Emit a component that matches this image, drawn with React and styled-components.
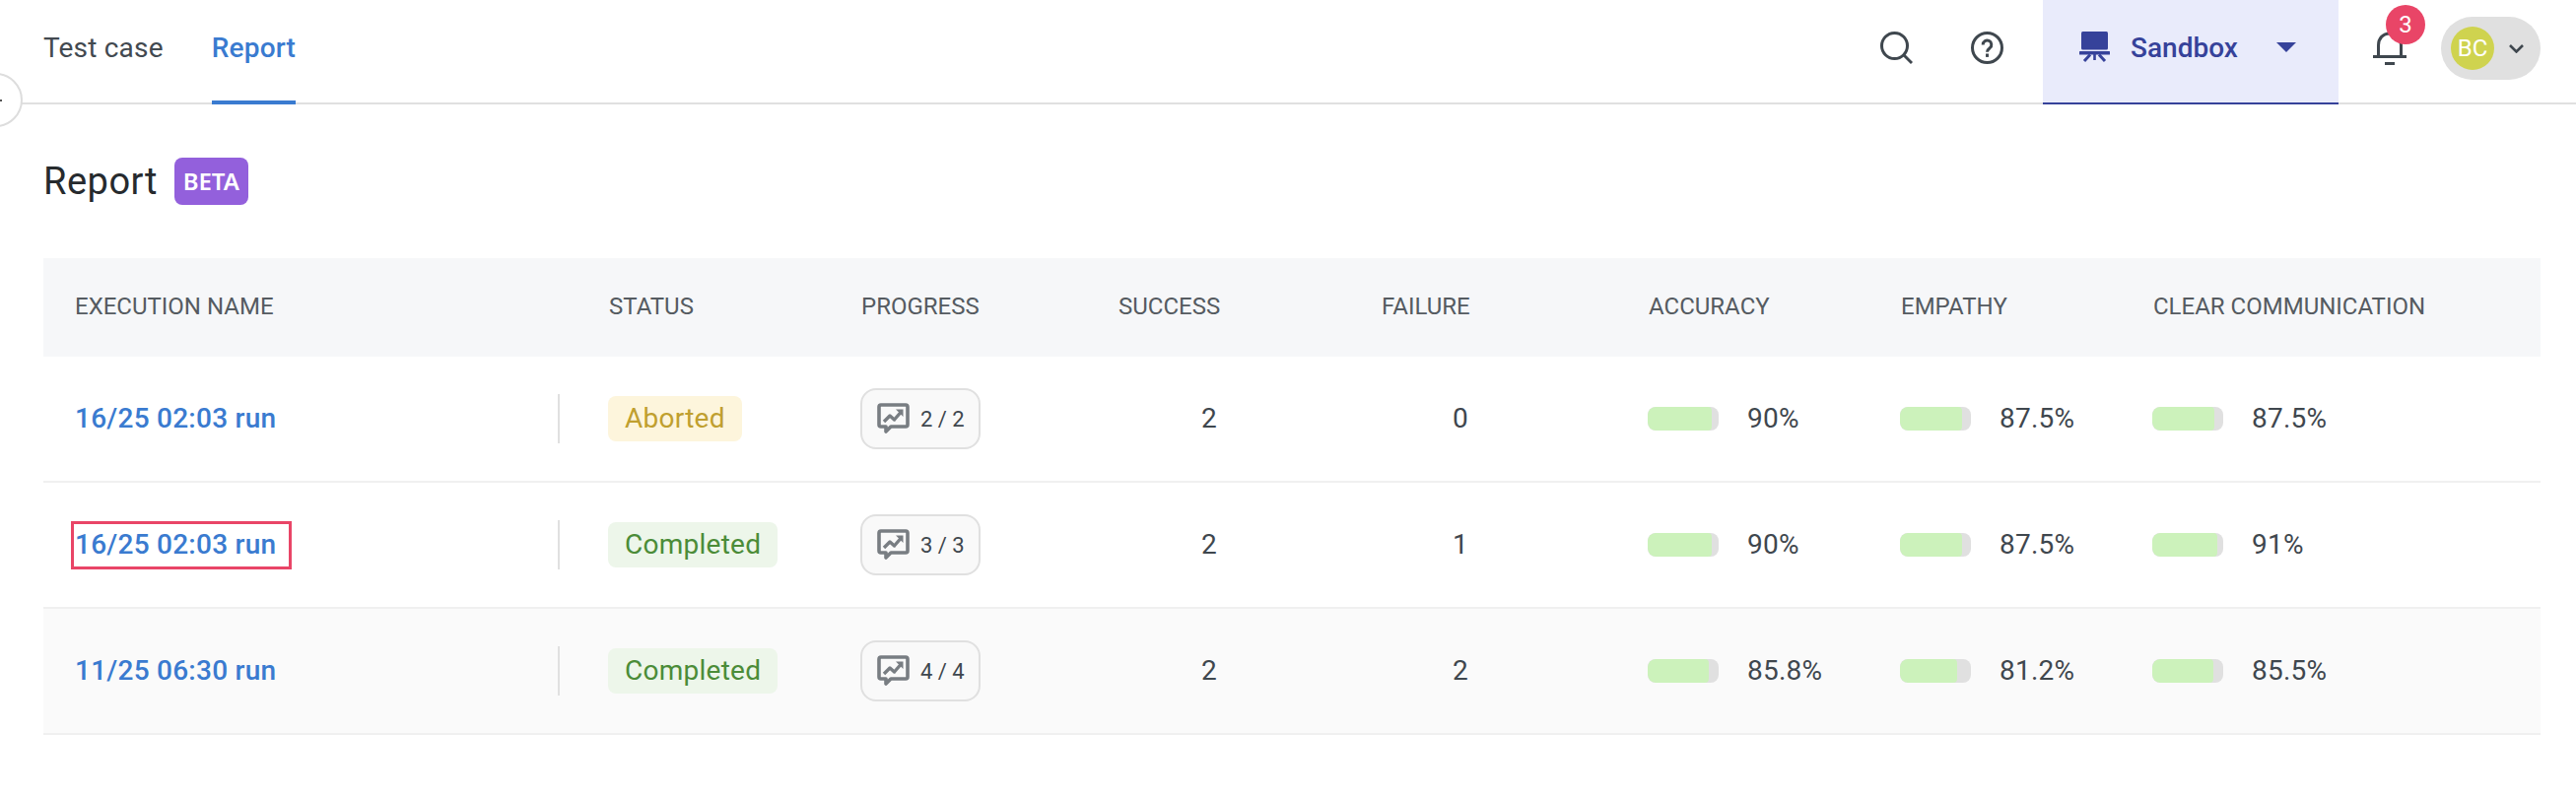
import { createGlobalStyle, styled } from "styled-components";

const GlobalStyle = createGlobalStyle`
    html, body {
        margin: 0;
        padding: 0;
        background: #fff;
        font-family: Roboto, "Noto Sans", sans-serif;
        overflow: hidden;
    }
`

const Page = styled.div`
    position: relative;
    width: 2614px;
    height: 810px;
    background: #fff;
`

const NavBar = styled.nav`
    height: 104px;
    display: flex;
    align-items: flex-start;
    justify-content: space-between;
    padding-left: 44px;
    border-bottom: 2px solid #e0e0e0;
`

const Tabs = styled.div`
    display: flex;
    gap: 49px;
`

const Tab = styled.div`
    height: 106px;
    box-sizing: border-box;
    line-height: 98px;
    font-size: 28px;
    letter-spacing: 0.2px;
    color: ${props => props.active ? "#3a7bd0" : "#424950"};
    font-weight: ${props => props.active ? 500 : 400};
    border-bottom: 4px solid ${props => props.active ? "#3a7bd0" : "transparent"};
`

const NavRight = styled.div`
    display: flex;
    align-items: flex-start;
    padding-right: 36px;
`

const IconButton = styled.div`
    width: 33px;
    height: 34px;
    margin: 32px ${props => props.right || "0"} 0 0;
    color: #3f474e;
`

const Workspace = styled.div`
    width: 300px;
    height: 106px;
    box-sizing: border-box;
    margin-right: 35px;
    padding: 0 43px 8px 37px;
    display: flex;
    align-items: center;
    background: #e9ebfb;
    border-bottom: 2px solid #36429a;
    color: #36429a;
    font-size: 28px;
    font-weight: 500;
`

const WorkspaceName = styled.span`
    margin: 0 auto 0 21px;
`

const Caret = styled.span`
    width: 0;
    height: 0;
    border-left: 10px solid transparent;
    border-right: 10px solid transparent;
    border-top: 10px solid #36429a;
`

const BellWrap = styled.div`
    position: relative;
    width: 34px;
    height: 34px;
    margin: 32px 35px 0 0;
    color: #3f474e;
`

const Badge = styled.span`
    position: absolute;
    left: 13px;
    top: -27px;
    width: 40px;
    height: 40px;
    border-radius: 50%;
    background: #e94567;
    color: #fff;
    font-size: 24px;
    line-height: 40px;
    text-align: center;
`

const UserPill = styled.div`
    width: 101px;
    height: 64px;
    margin-top: 17px;
    box-sizing: border-box;
    padding: 0 17px 0 10px;
    display: flex;
    align-items: center;
    justify-content: space-between;
    border-radius: 32px;
    background: #e0e0e0;
    color: #3f474e;
`

const Avatar = styled.div`
    width: 44px;
    height: 44px;
    border-radius: 50%;
    background: #cfd34f;
    color: #fff;
    font-size: 24px;
    line-height: 44px;
    text-align: center;
`

const CollapseButton = styled.div`
    position: absolute;
    left: -32px;
    top: 74px;
    width: 55px;
    height: 55px;
    box-sizing: border-box;
    border: 2px solid #ddd;
    border-radius: 50%;
    background: #fff;
    &::after {
        content: "";
        position: absolute;
        left: 30px;
        top: 25px;
        width: 2px;
        height: 2px;
        background: #555;
    }
`

const Content = styled.main`
    padding: 54px 36px 0 44px;
`

const TitleRow = styled.div`
    display: flex;
    align-items: center;
    gap: 17px;
    height: 48px;
`

const Title = styled.h1`
    margin: 0;
    font-size: 38px;
    font-weight: 400;
    color: #262a2e;
    letter-spacing: 0.5px;
`

const Beta = styled.span`
    width: 75px;
    height: 48px;
    border-radius: 8px;
    background: #9360dc;
    color: #fff;
    font-family: "Noto Sans", sans-serif;
    font-size: 24px;
    font-weight: 600;
    line-height: 48px;
    text-align: center;
`

const Table = styled.div`
    margin-top: 54px;
`

const Row = styled.div`
    display: grid;
    grid-template-columns: 542px 256px 261px 267px 271px 256px 256px 1fr;
    align-items: center;
    height: ${props => props.head ? "100px" : "128px"};
    box-sizing: border-box;
    background: ${props => props.head ? "#f6f7f9" : props.shaded ? "#fafafa" : "#fff"};
    border-bottom: ${props => props.head ? "none" : "2px solid #f0f0f0"};
`

const HeadCell = styled.div`
    padding: 0 0 2px 32px;
    font-size: 24px;
    color: #555b61;
`

const Cell = styled.div`
    position: relative;
    padding-left: 32px;
    display: flex;
    align-items: center;
    font-size: 28px;
    letter-spacing: 0.25px;
    color: #3f474e;
`

const NameLink = styled.a`
    position: relative;
    padding-bottom: 2px;
    color: #3a7bd0;
    font-weight: 500;
    &::after {
        content: "";
        display: ${props => props.marked ? "block" : "none"};
        position: absolute;
        left: -4px;
        right: -16px;
        top: -6.5px;
        bottom: -7.5px;
        border: 3px solid #e94567;
    }
`

const Divider = styled.span`
    position: absolute;
    right: 18px;
    top: -7.5px;
    width: 2px;
    height: 50px;
    background: #e0e0e0;
`

const Status = styled.span`
    height: 46px;
    margin-left: -1px;
    padding: 0 17px;
    border-radius: 8px;
    line-height: 46px;
    color: ${props => props.kind === "Aborted" ? "#c09f2f" : "#4b8c38"};
    background: ${props => props.kind === "Aborted" ? "#fdf5dc" : "#edf6ea"};
`

const Progress = styled.div`
    height: 62px;
    width: 122px;
    margin-left: -1px;
    box-sizing: border-box;
    display: flex;
    align-items: center;
    gap: 11px;
    padding-left: 15px;
    border: 2px solid #e0e0e0;
    border-radius: 16px;
    background: #f9f9f9;
    font-size: 22px;
    letter-spacing: 0;
    color: #3f474e;
`

const Count = styled.span`
    width: ${props => props.width || "100px"};
    padding-bottom: 2px;
    text-align: right;
`

const Score = styled.div`
    display: flex;
    align-items: center;
    gap: 29px;
    margin-left: -1px;
`

const ScoreText = styled.span`
    padding-bottom: 2px;
`

const Track = styled.div`
    width: 72px;
    height: 24px;
    border-radius: 8px;
    overflow: hidden;
    background: #e0e0e0;
`

const Fill = styled.div`
    height: 100%;
    border-radius: 8px 4px 4px 8px;
    background: #ccf2bb;
`

const SearchIcon = () => (
    <svg width="33" height="34" viewBox="0 0 33 34" fill="none" stroke="currentColor" strokeWidth="3">
        <circle cx="14.5" cy="14.5" r="13" />
        <path d="M24 24l8 8" />
    </svg>
)

const HelpIcon = () => (
    <svg width="33" height="34" viewBox="0 0 33 34" fill="none" stroke="currentColor" strokeWidth="3">
        <circle cx="16.5" cy="16.5" r="15" />
        <path d="M12.2 13.5a4.3 4.3 0 1 1 7 3.2c-1.6 1.2-2.7 2-2.7 4" />
        <path d="M16.5 22.5v3.4" />
    </svg>
)

const BoardIcon = () => (
    <svg width="31" height="32" viewBox="0 0 31 32" fill="#36429a">
        <rect x="2" y="0" width="27" height="18.5" rx="1.5" />
        <rect x="0" y="20" width="31" height="3.5" rx="0.5" />
        <path d="M14.2 23h2.6v6h-2.6z" />
        <path d="M11 23.5L5 30M20 23.5l6 6.5" fill="none" stroke="#36429a" strokeWidth="3" />
    </svg>
)

const BellIcon = () => (
    <svg width="34" height="34" viewBox="0 0 34 34" fill="none" stroke="currentColor" strokeWidth="3">
        <path d="M5.5 25V14C5.5 7 10 2 17 2s11.5 5 11.5 12v11" />
        <path d="M0 25.5h34" />
        <path d="M12 32.5h10" />
    </svg>
)

const ChevronIcon = () => (
    <svg width="15" height="9" viewBox="0 0 15 9" fill="none" stroke="currentColor" strokeWidth="2.6">
        <path d="M1 1l6.5 6.5L14 1" />
    </svg>
)

const ChatChartIcon = () => (
    <svg width="33" height="32" viewBox="0 0 33 32" fill="none" stroke="#787d82" strokeWidth="3.6" strokeLinejoin="round">
        <path d="M4 2h25a2 2 0 0 1 2 2v18a2 2 0 0 1-2 2H14l-5 5v-5H4a2 2 0 0 1-2-2V4a2 2 0 0 1 2-2z" />
        <path d="M7 19l6-6 4.5 4L24 9.5" strokeWidth="3.4" />
        <path d="M19 6.5h7.5V14z" fill="#787d82" stroke="none" />
    </svg>
)

const columns = ["EXECUTION NAME", "STATUS", "PROGRESS", "SUCCESS", "FAILURE", "ACCURACY", "EMPATHY", "CLEAR COMMUNICATION"]

const runs = [
    { name: "16/25 02:03 run", status: "Aborted", progress: "2 / 2", success: 2, failure: 0, scores: [90, 87.5, 87.5] },
    { name: "16/25 02:03 run", status: "Completed", progress: "3 / 3", success: 2, failure: 1, scores: [90, 87.5, 91], marked: true },
    { name: "11/25 06:30 run", status: "Completed", progress: "4 / 4", success: 2, failure: 2, scores: [85.8, 81.2, 85.5], shaded: true },
]

const App = () => {
    return (
        <Page>
            <GlobalStyle />
            <NavBar>
                <Tabs>
                    <Tab>Test case</Tab>
                    <Tab active>Report</Tab>
                </Tabs>
                <NavRight>
                    <IconButton right="59px"><SearchIcon /></IconButton>
                    <IconButton right="40px"><HelpIcon /></IconButton>
                    <Workspace>
                        <BoardIcon />
                        <WorkspaceName>Sandbox</WorkspaceName>
                        <Caret />
                    </Workspace>
                    <BellWrap>
                        <BellIcon />
                        <Badge>3</Badge>
                    </BellWrap>
                    <UserPill>
                        <Avatar>BC</Avatar>
                        <ChevronIcon />
                    </UserPill>
                </NavRight>
            </NavBar>
            <CollapseButton />
            <Content>
                <TitleRow>
                    <Title>Report</Title>
                    <Beta>BETA</Beta>
                </TitleRow>
                <Table>
                    <Row head>
                        {columns.map(col => <HeadCell key={col}>{col}</HeadCell>)}
                    </Row>
                    {runs.map((run, i) => (
                        <Row key={i} shaded={run.shaded}>
                            <Cell>
                                <NameLink marked={run.marked}>{run.name}</NameLink>
                                <Divider />
                            </Cell>
                            <Cell><Status kind={run.status}>{run.status}</Status></Cell>
                            <Cell>
                                <Progress><ChatChartIcon />{run.progress}</Progress>
                            </Cell>
                            <Cell><Count>{run.success}</Count></Cell>
                            <Cell><Count width="88px">{run.failure}</Count></Cell>
                            {run.scores.map((score, j) => (
                                <Cell key={j}>
                                    <Score>
                                        <Track><Fill style={{ width: `${score}%` }} /></Track>
                                        <ScoreText>{score}%</ScoreText>
                                    </Score>
                                </Cell>
                            ))}
                        </Row>
                    ))}
                </Table>
            </Content>
        </Page>
    )
}

export default App;
